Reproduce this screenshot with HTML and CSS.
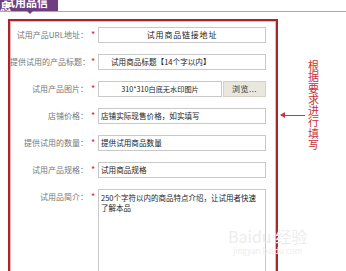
FILE: index.html
```html
<!DOCTYPE html>
<html>
  <head>
    <title>试用品信息</title>
    <meta charset="utf-8" />
    <link rel="stylesheet" href="styles.css">
  </head>
  <body>
    <div class="tabbar">
      <span class="tab">试用品信息</span>
    </div>
    <div class="page">
      <div class="box">
        <div class="form">
          <label>试用产品URL地址：</label><span class="star">*</span>
          <div class="field center wide">试用商品链接地址</div>

          <label>提供试用的产品标题：</label><span class="star">*</span>
          <div class="field indent">试用商品标题【14个字以内】</div>

          <label>试用产品图片：</label><span class="star">*</span>
          <div class="file">
            <div class="field center small">310*310白底无水印图片</div>
            <span class="browse">浏览...</span>
          </div>

          <label>店铺价格：</label><span class="star">*</span>
          <div class="field">店铺实际现售价格，如实填写</div>

          <label>提供试用的数量：</label><span class="star">*</span>
          <div class="field">提供试用商品数量</div>

          <label>试用产品规格：</label><span class="star">*</span>
          <div class="field">试用商品规格</div>

          <label>试用品简介：</label><span class="star">*</span>
          <div class="field area">250个字符以内的商品特点介绍，让试用者快速了解本品</div>
        </div>
      </div>
      <div class="note">
        <span class="arrow"></span>
        <span class="note-text">根据要求进行填写</span>
      </div>
    </div>
    <div class="mark">
      <div class="mark-big">Baidu 经验</div>
      <div class="mark-small">jingyan.baidu.com</div>
    </div>
  </body>
</html>
```

FILE: styles.css
```css
body {
  margin: 0;
  background: #fff;
  font-family: "Noto Sans CJK SC", "DejaVu Sans", sans-serif;
  overflow: hidden;
  height: 271px;
}

.tabbar {
  height: 11px;
  border-bottom: 1px solid #a9a9a9;
  position: relative;
}

.tab {
  display: block;
  width: 58px;
  height: 11px;
  background: #6e3f80;
  color: #fff;
  font-size: 11px;
  font-weight: bold;
  line-height: 4px;
  text-indent: 4px;
  overflow: hidden;
}

.tab::after {
  content: "";
  position: absolute;
  left: 27px;
  top: 11px;
  border: 3px solid transparent;
  border-top-color: #6e3f80;
}

.page {
  display: flex;
  margin: 7px 0 0 8px;
}

.box {
  width: 266px;
  height: 300px;
  border: 2px solid #a8262a;
  box-shadow: inset 0 0 0 1px #ecb4b4;
  flex-shrink: 0;
}

.form {
  display: grid;
  grid-template-columns: 78px 10px 168px;
  row-gap: 11px;
  padding: 6px 0 0 0;
  align-items: start;
}

label {
  font-size: 8px;
  color: #777;
  text-align: right;
  line-height: 16px;
  white-space: nowrap;
}

.star {
  color: #d23;
  font-size: 9px;
  line-height: 16px;
  text-align: center;
}

.field {
  height: 14px;
  border: 1px solid #c8c8c8;
  background: #fff;
  font-size: 7.6px;
  line-height: 14px;
  color: #222;
  padding: 0 2px;
  white-space: nowrap;
  overflow: hidden;
}

.center {
  text-align: center;
}

.wide {
  font-size: 8px;
  letter-spacing: 0.8px;
}

.indent {
  padding-left: 12px;
}

.small {
  font-size: 7.2px;
}

.file {
  display: flex;
  gap: 1px;
}

.file .field {
  flex: 1;
}

.browse {
  width: 43px;
  height: 16px;
  box-sizing: border-box;
  background: #eae7df;
  border: 1px solid #d6d2c8;
  font-size: 8px;
  line-height: 14px;
  color: #333;
  text-align: center;
  letter-spacing: 0.5px;
}

.area {
  height: 110px;
  white-space: normal;
  padding: 3px 4px 3px 2px;
  font-size: 7.5px;
  line-height: 10px;
}

.note {
  display: flex;
  align-items: flex-start;
  margin-left: 3px;
}

.arrow {
  display: block;
  width: 24px;
  height: 1px;
  background: #c23a3a;
  margin-top: 96px;
  position: relative;
}

.arrow::before {
  content: "";
  position: absolute;
  left: -1px;
  top: -3px;
  border: 3px solid transparent;
  border-right: 5px solid #c23a3a;
  border-left: 0;
}

.note-text {
  width: 11px;
  font-size: 11px;
  line-height: 11.3px;
  color: #c8323a;
  margin-top: 41px;
  margin-left: 3px;
  word-break: break-all;
}

.mark {
  position: absolute;
  left: 228px;
  top: 226px;
  color: #ededed;
  text-align: center;
}

.mark-big {
  font-size: 16px;
  line-height: 20px;
}

.mark-small {
  font-size: 8px;
  line-height: 10px;
}
```
